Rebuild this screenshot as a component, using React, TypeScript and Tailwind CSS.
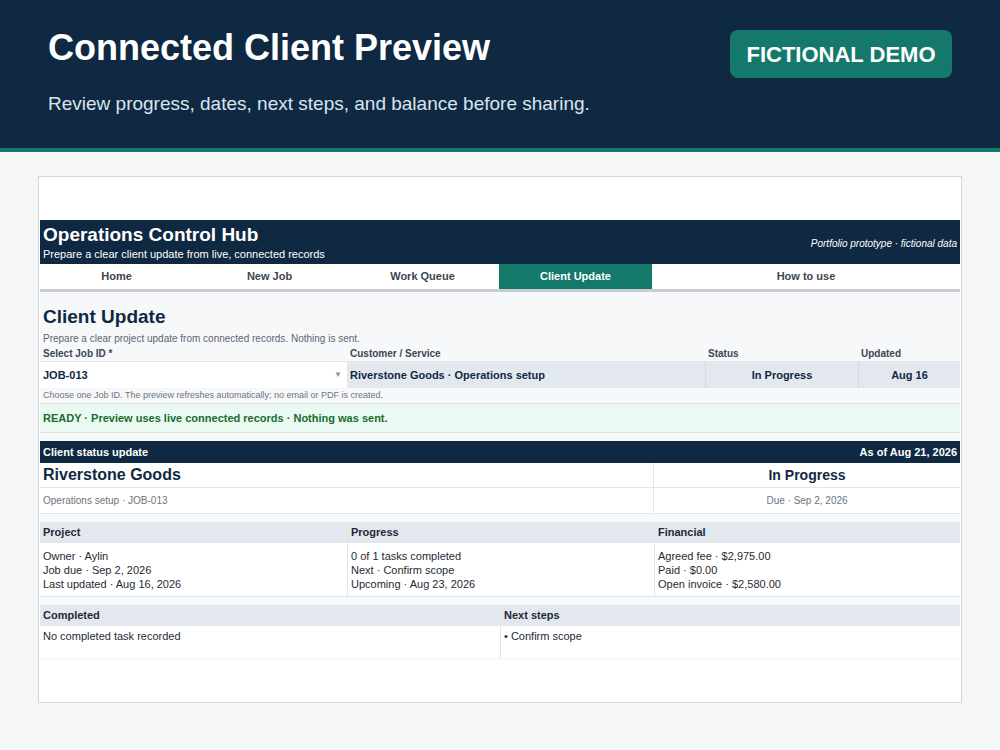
export default function App() {
  const f = { fontFamily: '"Liberation Sans", Arial, sans-serif' };
  return (
    <div className="w-[1000px] h-[750px] bg-[#f4f6f8] overflow-hidden" style={f}>
      <div className="h-[148px] bg-[#0f2942] relative px-[48px] pt-[28px]">
        <div className="text-white text-[36px] font-bold leading-[40px]">Connected Client Preview</div>
        <div className="text-[#dbe4ee] text-[19px] mt-[22px]">Review progress, dates, next steps, and balance before sharing.</div>
        <div className="absolute right-[48px] top-[30px] h-[48px] w-[222px] rounded-[8px] bg-[#14796b] text-white text-[22px] font-bold flex items-center justify-center">FICTIONAL DEMO</div>
      </div>
      <div className="h-[4px] bg-[#14796b]" />
      <div className="ml-[38px] mt-[24px] w-[924px] h-[527px] bg-white border border-[#cfd6de] pt-[43px] px-[1px]">
        <div className="w-[920px] bg-[#f7f8fa] h-[440px] text-[#1f2a36]">
          <div className="h-[44px] bg-[#0f2942] px-[3px] relative">
            <div className="text-white text-[19px] font-bold leading-[26px] pt-[2px]">Operations Control Hub</div>
            <div className="text-white text-[11px] leading-[12px]">Prepare a clear client update from live, connected records</div>
            <div className="absolute right-[3px] top-[16px] text-white text-[10px] italic">Portfolio prototype · fictional data</div>
          </div>
          <div className="flex h-[25px] bg-white text-[11px] font-bold text-[#3b4653] border-b-[3px] border-[#c9cdd2] box-content">
            {["Home", "New Job", "Work Queue"].map(t => <div key={t} className="w-[153px] flex items-center justify-center">{t}</div>)}
            <div className="w-[153px] flex items-center justify-center bg-[#14796b] text-white">Client Update</div>
            <div className="flex-1 flex items-center justify-center">How to use</div>
          </div>
          <div className="px-[3px] pt-[14px] text-[19px] font-bold text-[#0f2942] leading-[22px]">Client Update</div>
          <div className="px-[3px] mt-[5px] text-[10px] text-[#5b6672] leading-[12px]">Prepare a clear project update from connected records. Nothing is sent.</div>
          <div className="flex text-[10px] font-bold text-[#3b4653] h-[16px] items-center">
            <div className="w-[307px] px-[3px]">Select Job ID *</div>
            <div className="w-[358px] px-[3px]">Customer / Service</div>
            <div className="w-[153px] px-[3px]">Status</div>
            <div className="flex-1 px-[3px]">Updated</div>
          </div>
          <div className="flex h-[27px] text-[11px] font-bold text-[#0f2942] border-t border-[#e2e6eb]">
            <div className="w-[307px] px-[3px] bg-white flex items-center justify-between"><span>JOB-013</span><span className="text-[8px] text-[#8a949e] mr-[2px]">▼</span></div>
            <div className="w-[358px] px-[3px] bg-[#e3e8ef] flex items-center">Riverstone Goods · Operations setup</div>
            <div className="w-[153px] bg-[#e3e8ef] border-l border-[#d3d9e0] flex items-center justify-center">In Progress</div>
            <div className="flex-1 bg-[#e3e8ef] border-l border-[#d3d9e0] flex items-center justify-center">Aug 16</div>
          </div>
          <div className="px-[3px] text-[9px] text-[#6b7580] h-[15px] flex items-center">Choose one Job ID. The preview refreshes automatically; no email or PDF is created.</div>
          <div className="h-[30px] bg-[#eafaf2] border-y border-[#d8e8df] px-[3px] flex items-center text-[11px] font-bold text-[#1b6b2f]">READY · Preview uses live connected records · Nothing was sent.</div>
          <div className="h-[8px]" />
          <div className="h-[22px] bg-[#0f2942] text-white text-[11px] font-bold flex items-center justify-between px-[3px]">
            <span>Client status update</span><span>As of Aug 21, 2026</span>
          </div>
          <div className="flex bg-white">
            <div className="w-[614px] border-r border-[#e2e6eb]">
              <div className="h-[25px] px-[3px] text-[16px] font-bold text-[#0f2942] flex items-center border-b border-[#e2e6eb]">Riverstone Goods</div>
              <div className="h-[26px] px-[3px] text-[10px] text-[#6b7580] flex items-center border-b border-[#e2e6eb]">Operations setup · JOB-013</div>
            </div>
            <div className="flex-1">
              <div className="h-[25px] text-[14px] font-bold text-[#0f2942] flex items-center justify-center border-b border-[#e2e6eb]">In Progress</div>
              <div className="h-[26px] text-[10px] text-[#6b7580] flex items-center justify-center border-b border-[#e2e6eb]">Due · Sep 2, 2026</div>
            </div>
          </div>
          <div className="h-[8px]" />
          <div className="flex text-[11px]">
            {[["Project", ["Owner · Aylin", "Job due · Sep 2, 2026", "Last updated · Aug 16, 2026"]],
              ["Progress", ["0 of 1 tasks completed", "Next · Confirm scope", "Upcoming · Aug 23, 2026"]],
              ["Financial", ["Agreed fee · $2,975.00", "Paid · $0.00", "Open invoice · $2,580.00"]]].map(([h, ls], i) => (
              <div key={i} className={`${i === 2 ? "flex-1" : "w-[307px]"} ${i > 0 ? "border-l border-[#e2e6eb]" : ""}`}>
                <div className="h-[21px] bg-[#e3e8ef] px-[3px] flex items-center font-bold">{h as string}</div>
                <div className="bg-white px-[3px] pt-[6px] h-[54px] leading-[14px] border-b border-[#e2e6eb]">
                  {(ls as string[]).map(l => <div key={l}>{l}</div>)}
                </div>
              </div>
            ))}
          </div>
          <div className="h-[8px]" />
          <div className="flex text-[11px]">
            <div className="w-[460px]">
              <div className="h-[21px] bg-[#e3e8ef] px-[3px] flex items-center font-bold">Completed</div>
              <div className="bg-white px-[3px] pt-[2px] h-[32px]">No completed task recorded</div>
            </div>
            <div className="flex-1 border-l border-[#e2e6eb]">
              <div className="h-[21px] bg-[#e3e8ef] px-[3px] flex items-center font-bold">Next steps</div>
              <div className="bg-white px-[3px] pt-[2px] h-[32px]">• Confirm scope</div>
            </div>
          </div>
        </div>
      </div>
    </div>
  );
}
